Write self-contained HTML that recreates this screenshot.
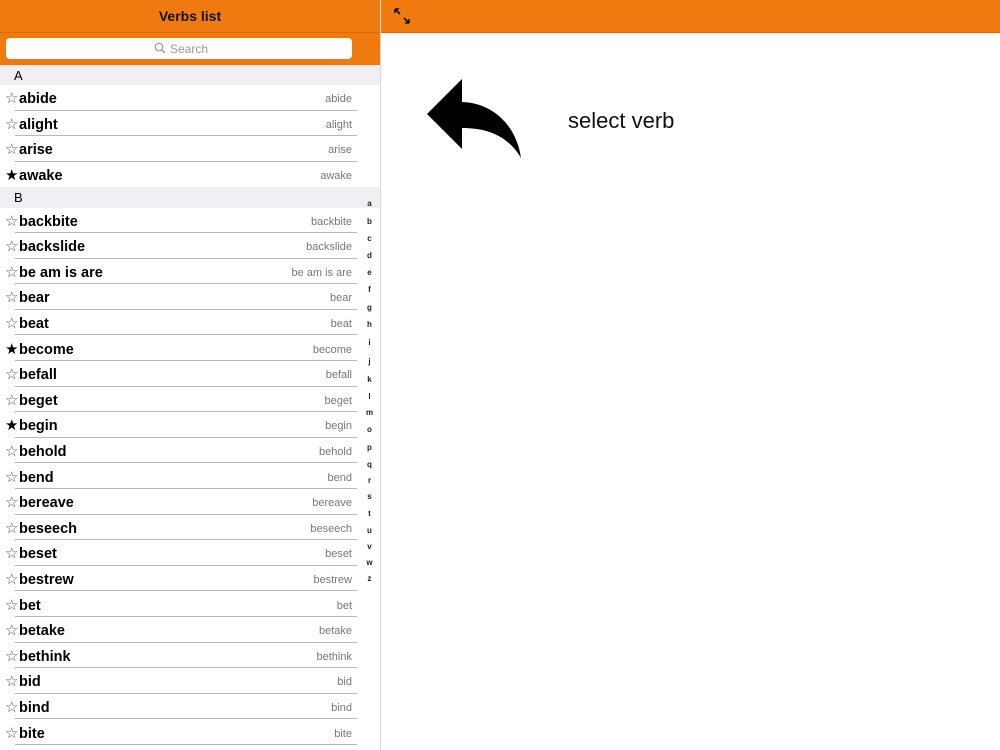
<!DOCTYPE html>
<html><head><meta charset="utf-8"><style>
*{margin:0;padding:0;box-sizing:border-box}
body{width:1000px;height:750px;overflow:hidden;background:#fff;font-family:"Liberation Sans",sans-serif;position:relative}
.or{position:absolute;background:#ef7a10}
.r{position:absolute;left:0;width:380px;height:25.6px}
.r .s{position:absolute;left:5px;top:4px;font-size:15px;color:#555;font-family:"DejaVu Sans",sans-serif}
.r .s.f{color:#000}
.r .n{position:absolute;left:19px;top:6px;font-size:14.5px;font-weight:bold;color:#000}
.r .g{position:absolute;right:28px;top:8px;font-size:11px;color:#777}
.r .l{position:absolute;left:15px;right:23px;bottom:0;height:1px;background:#b8b8b8}
.h{position:absolute;left:0;width:380px;background:#efeff4;font-size:13px;color:#000;padding-left:14px}
.ix{position:absolute;left:366px;width:7px;text-align:center;font-size:8px;font-weight:bold;color:#222}
</style></head><body>
<div class="or" style="left:0;top:0;width:1000px;height:32px"></div>
<div class="or" style="left:0;top:32px;width:380px;height:33px"></div>
<div style="position:absolute;left:0;top:32px;width:1000px;height:1px;background:#d86a08"></div>
<div style="position:absolute;left:0;top:8px;width:380px;text-align:center;font-size:14px;font-weight:bold;color:#111">Verbs list</div>
<div style="position:absolute;left:6px;top:38px;width:346px;height:21px;background:#fff;border-radius:4px"></div>
<svg style="position:absolute;left:154px;top:42px" width="12" height="12" viewBox="0 0 12 12"><circle cx="5" cy="5" r="3.8" fill="none" stroke="#999" stroke-width="1.2"/><path d="M7.8 7.8L11 11" stroke="#999" stroke-width="1.3"/></svg>
<div style="position:absolute;left:170px;top:42px;font-size:12px;color:#999">Search</div>
<div style="position:absolute;left:380px;top:0;width:1px;height:750px;background:#d8d8d8"></div>
<svg style="position:absolute;left:393px;top:7px" width="18" height="18" viewBox="0 0 18 18"><path d="M2 2L7 7M2 2h4M2 2v4" stroke="#111" stroke-width="1.6" fill="none"/><path d="M16 16L11 11M16 16h-4M16 16v-4" stroke="#111" stroke-width="1.6" fill="none"/></svg>
<svg style="position:absolute;left:420px;top:75px" width="110" height="90" viewBox="420 75 110 90"><path d="M427 114L462 79V102C495 103 517 128 521 158C508 136 488 128 462 128V149Z" fill="#000"/></svg>
<div style="position:absolute;left:568px;top:108px;font-size:22px;color:#111">select verb</div>
<div class="h" style="top:65px;height:20px;line-height:21px">A</div>
<div class="h" style="top:187px;height:21px;line-height:22px">B</div>
<div id="rows"></div>
<script>
var A=[["abide",0],["alight",0],["arise",0],["awake",1]];
var B=[["backbite",0],["backslide",0],["be am is are",0],["bear",0],["beat",0],["become",1],["befall",0],["beget",0],["begin",1],["behold",0],["bend",0],["bereave",0],["beseech",0],["beset",0],["bestrew",0],["bet",0],["betake",0],["bethink",0],["bid",0],["bind",0],["bite",0]];
var h="";
function row(w,t,last){h+='<div class="r" style="top:'+t+'px"><span class="s'+(w[1]?' f':'')+'">'+(w[1]?'★':'☆')+'</span><span class="n">'+w[0]+'</span><span class="g">'+w[0]+'</span>'+(last?'':'<div class="l"></div>')+'</div>';}
A.forEach(function(w,i){row(w,85+i*25.6,i==3)});
B.forEach(function(w,i){row(w,207.5+i*25.6,false)});
var ix=[["a",203],["b",221],["c",238],["d",255],["e",272],["f",289],["g",307],["h",324],["i",342],["j",361],["k",379],["l",396],["m",412],["o",429],["p",447],["q",464],["r",480],["s",496],["t",513],["u",530],["v",546],["w",562],["z",578]];
ix.forEach(function(x){h+='<div class="ix" style="top:'+(x[1]-4)+'px">'+x[0]+'</div>'});
document.getElementById("rows").innerHTML=h;
</script>
</body></html>
